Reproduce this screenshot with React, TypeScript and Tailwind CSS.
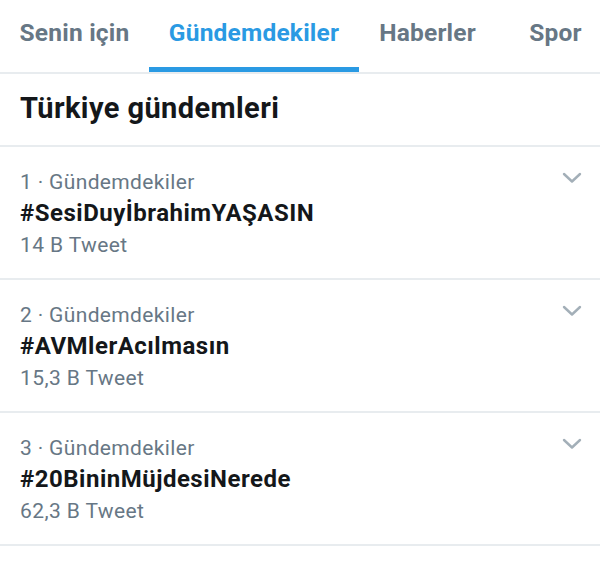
import React from 'react';

interface Trend {
  rank: number;
  tag: string;
  count: string;
}

const trends: Trend[] = [
  { rank: 1, tag: '#SesiDuyİbrahimYAŞASIN', count: '14 B Tweet' },
  { rank: 2, tag: '#AVMlerAcılmasın', count: '15,3 B Tweet' },
  { rank: 3, tag: '#20BininMüjdesiNerede', count: '62,3 B Tweet' },
];

const tabs = [
  { label: 'Senin için', width: 'w-[149px]', active: false },
  { label: 'Gündemdekiler', width: 'w-[210px]', active: true },
  { label: 'Haberler', width: 'w-[137px]', active: false },
  { label: 'Spor', width: 'w-[119px]', active: false },
];

const Chevron = () => (
  <svg width="20" height="12" viewBox="0 0 20 12" fill="none">
    <path d="M2 2 L10 9.5 L18 2" stroke="#a3afb8" strokeWidth="2.4" strokeLinecap="round" strokeLinejoin="round" />
  </svg>
);

export default function App() {
  return (
    <div className="w-[600px] h-[562px] overflow-hidden bg-white" style={{ fontFamily: 'Roboto, "Liberation Sans", sans-serif' }}>
      <div className="flex h-[74px] border-b-2 border-[#e8ecef] overflow-hidden">
        {tabs.map(tab => (
          <div key={tab.label} className={`${tab.width} shrink-0 relative flex justify-center pt-[17px]`}>
            <span className={`text-[24.5px] tracking-[0.2px] font-bold leading-[32px] ${tab.active ? 'text-[#2a9ae3]' : 'text-[#677785]'}`}>
              {tab.label}
            </span>
            {tab.active && <div className="absolute left-0 right-0 bottom-0 h-[5px] bg-[#2a9ae3]" />}
          </div>
        ))}
      </div>

      <div className="h-[73px] border-b-2 border-[#e8ecef] px-[20px] flex items-center">
        <h2 className="text-[29px] tracking-[0.4px] font-bold text-[#14171a] leading-none pb-[2px]">Türkiye gündemleri</h2>
      </div>

      {trends.map(t => (
        <div key={t.rank} className="h-[133px] border-b-2 border-[#e8ecef] px-[20px] pt-[19px] relative flex flex-col">
          <div className="text-[21px] tracking-[0.35px] leading-[32px] text-[#677785]">{t.rank} · Gündemdekiler</div>
          <div className="text-[24px] tracking-[0.5px] leading-[31px] font-bold text-[#14171a]">{t.tag}</div>
          <div className="text-[21px] tracking-[0.4px] leading-[33px] text-[#677785]">{t.count}</div>
          <div className="absolute right-[18px] top-[25px]">
            <Chevron />
          </div>
        </div>
      ))}
    </div>
  );
}
